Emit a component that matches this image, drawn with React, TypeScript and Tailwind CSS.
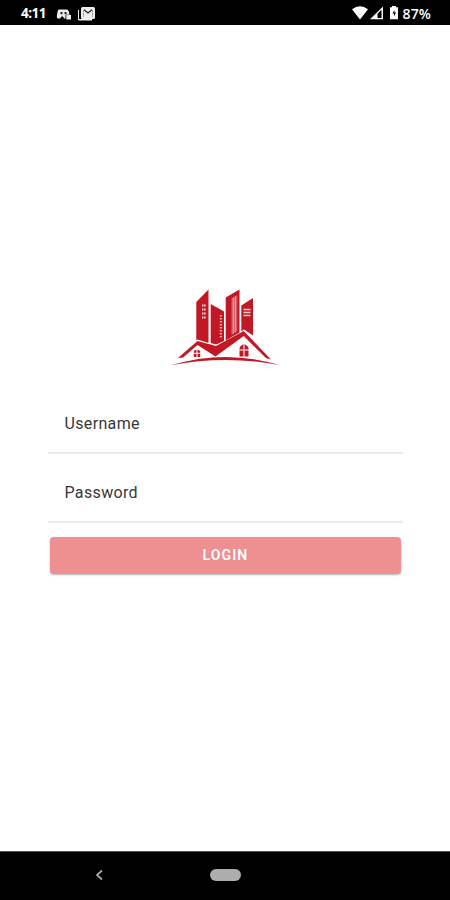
import React from "react";

function StatusBar() {
  return (
    <header className="flex h-[25px] shrink-0 items-center bg-black pl-[21px] pr-[19px] pt-[2px] text-white">
      <span className="w-[35px] font-['Open_Sans',sans-serif] text-[13.500px] font-bold leading-none tracking-[-0.5px]">4:11</span>
      <svg className="h-[14px] w-[42px]" viewBox="56 6 42 14" fill="#eee">
        <path d="M59 8.500h7.500q1.800 0 2.300 2l.7 3h-4v4H64l-1-2h-1.500l-1.500 2h-2.500q-1-1-.6-3l.7-4Q58 8.500 59 8.500z" />
        <path d="M60.500 11h2v2.200h-2zM64.500 11h2v2h-2z" fill="#222" />
        <rect x="66.300" y="13.800" width="4.700" height="4.700" />
        <path d="M79 9v9h13v1.500H79.500Q78 19.500 78 18V9z" />
        <rect x="81" y="6" width="14" height="12" rx="1.500" />
        <path d="M84 8.800l4 3.200 4-3.200" fill="none" stroke="#222" strokeWidth="1.300" />
        <path d="M83.500 9v7M92.500 9v7" fill="none" stroke="#999" strokeWidth=".8" />
      </svg>
      <svg className="ml-auto mr-[2px] h-[15px] w-[50px]" viewBox="351 6 50 15" fill="#fff">
        <path d="M352 9.200Q360 3.500 368 9.200L360 19.500z" />
        <path d="M370 19.300L383 6.500V19.300z" />
        <path d="M377.500 13.800L381.500 9.800V18H377.500z" fill="#000" />
        <path d="M392 6h4v1.300h2v12H390v-12h2z" />
        <path d="M394.500 10l-2 3.500h1.500v3l2-4h-1.500z" fill="#000" />
      </svg>
      <span className="font-['Open_Sans',sans-serif] text-[14px] font-semibold leading-none tracking-[0.1px]">87%</span>
    </header>
  );
}

function Logo() {
  return (
    <svg className="h-[85px] w-[120px]" viewBox="165 285 120 85" fill="#c21724">
      <path d="M196.300 302L208.500 289.500V343L197.500 339.500L196.300 340.500z" />
      <path d="M210.700 304L224 311.500V341L216 344.500L210.700 343z" />
      <path d="M225.700 297.500L239.500 289.500V332.500L225.700 340.500z" />
      <path d="M241.300 305.500L253 298V335.500L244 329.500L241.300 331.200z" />
      <path d="M231.500 298.500L237.300 295V331L231.500 335z" fill="#d7626a" />
      <path d="M233.400 297.500V334M235.400 296.300V332.500" stroke="#eeb0b4" strokeWidth=".7" />
      <path d="M202 305.500h4M202 309.500h4M202 313.500h4M202 317.500h4" stroke="#f8dddd" strokeWidth="1.800" strokeDasharray="1.200 .5" />
      <path d="M220.800 315V338" stroke="#f0b8bb" strokeWidth="2" strokeDasharray="1.500 1.500" />
      <path d="M243.500 309.500h7M243.500 312.500h7M243.500 315.500h7" stroke="#f4d3d4" strokeWidth="1.400" />
      <path d="M178 358L197.500 341L216 346L243.700 331L271 359.500L266 358L243.700 336L215.500 356.500L197.500 345L183 357.500z" />
      <path d="M171 365.300Q226 348.500 280 365.300Q226 354.500 171 365.300z" />
      <path d="M193.800 351Q197 348 200.200 351V357H193.800z" />
      <path d="M239.500 348Q244 340.500 248.500 348V356.500H239.500z" />
      <path d="M197 348V357.500M193 353.300h8M244 343V357M239 350h10" stroke="#fff" strokeWidth="1" />
    </svg>
  );
}

function Field({ label }: { label: string }) {
  return (
    <label className="flex h-[69px] items-center border-b-2 border-[#ebebeb] pl-[16.500px] pt-[11px] text-[16px] tracking-[0.35px] text-[#383838]">
      {label}
    </label>
  );
}

export default function App() {
  return (
    <div className="flex h-[900px] w-[450px] flex-col bg-white font-[Roboto,sans-serif]">
      <StatusBar />
      <main className="flex flex-1 flex-col px-12 pt-[260px]">
        <div className="ml-[117px] h-[100px]"><Logo /></div>
        <div className="w-[355px]">
          <Field label="Username" />
          <Field label="Password" />
        </div>
        <button className="ml-[2px] mt-[14px] h-[37px] w-[351px] rounded-[4px] bg-[#ee8f92] text-[14px] font-semibold tracking-[1.100px] text-white shadow-[0_1px_2px_rgba(0,0,0,0.3)]">LOGIN</button>
      </main>
      <nav className="flex h-[49px] shrink-0 items-center border-t border-[#555] bg-black pb-[2px]">
        <svg className="ml-[94px] h-[12px] w-[10px]" viewBox="0 0 10 12" fill="none" stroke="#aaa" strokeWidth="1.700"><path d="M8 1.500L3 6l5 4.500" /></svg>
        <span className="ml-[106px] h-[12px] w-[31px] rounded-full bg-[#adadad]" />
      </nav>
    </div>
  );
}
